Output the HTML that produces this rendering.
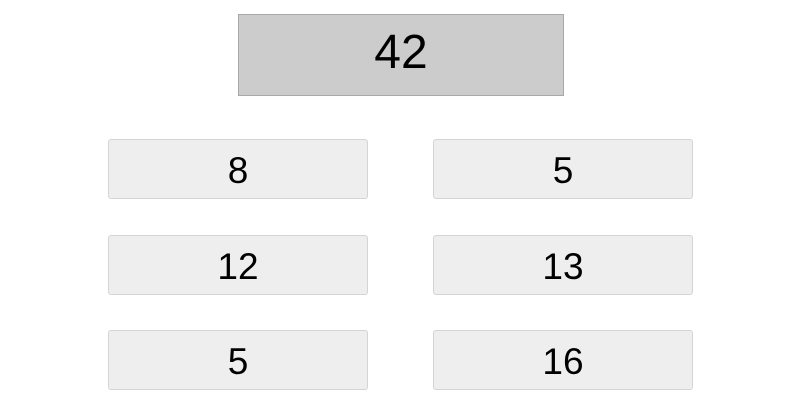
<!DOCTYPE html>
<html><head><style>
body{margin:0;width:800px;height:420px;background:#fff;font-family:"Liberation Sans",Arial,sans-serif;position:relative;overflow:hidden}
.t{position:absolute;left:238px;top:14px;width:324px;height:80px;background:#ccc;border:1px solid #a8a8a8;text-align:center;line-height:76px;font-size:48px;color:#000}
.b{position:absolute;width:258px;height:58px;background:#eee;border:1px solid #d4d4d4;border-radius:3px;text-align:center;line-height:62px;font-size:37px;color:#000}
</style></head><body>
<div class="t">42</div>
<div class="b" style="left:108px;top:139px">8</div>
<div class="b" style="left:433px;top:139px">5</div>
<div class="b" style="left:108px;top:235px">12</div>
<div class="b" style="left:433px;top:235px">13</div>
<div class="b" style="left:108px;top:330px">5</div>
<div class="b" style="left:433px;top:330px">16</div>
</body></html>
